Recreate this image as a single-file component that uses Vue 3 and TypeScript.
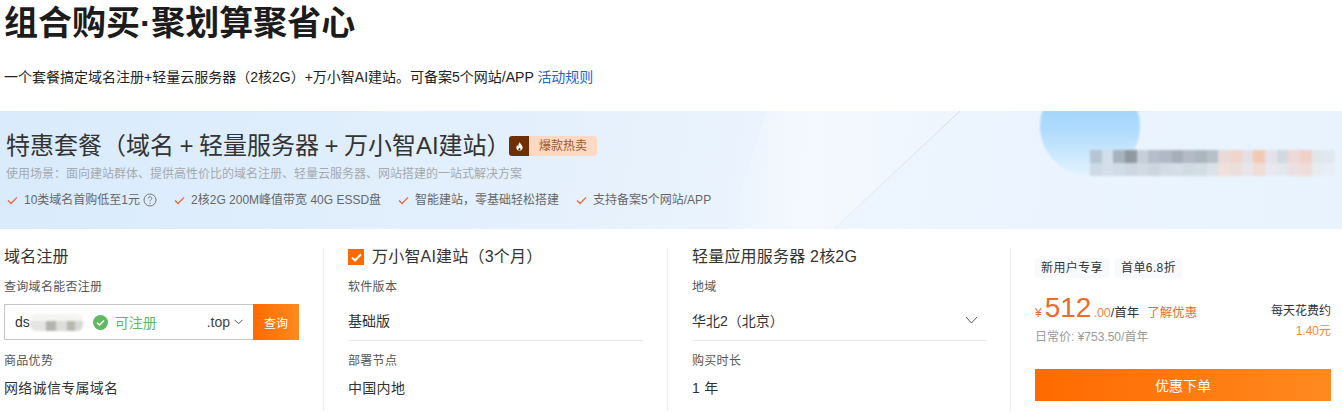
<script setup lang="ts">
const features = [
  { text: '10类域名首购低至1元', help: true },
  { text: '2核2G 200M峰值带宽 40G ESSD盘', help: false },
  { text: '智能建站，零基础轻松搭建', help: false },
  { text: '支持备案5个网站/APP', help: false },
];

// masked text in the banner corner, one shade per cell
const maskTop = ['#b4c4d2', '#d4dee8', '#a3b2ba', '#8c949c', '#c4ced8', '#b4bcc8', '#aeb6c4', '#a4acb8', '#b0b8c4', '#a8b4bc', '#b4bec6', '#e9d8d8', '#f0d4cc', '#e6dee2', '#f2c8b4', '#e4e2e8', '#d0d8de', '#eed8d4', '#f0d0c8', '#dfe6ec', '#e0e8f0'];
const maskBottom = ['#cdd9e4', '#d4deea', '#d0dae4', '#ccd6e0', '#d0d8e2', '#ccd4de', '#d2dae4', '#d4dce6', '#d0dae2', '#d2dce2', '#dce2e8', '#f0e0da', '#ecdedc', '#e8e6ea', '#f0dcd4', '#e8e8ee', '#e2e8ee', '#ecdfe0', '#f0dcd8', '#e6ecf2', '#e8eef4'];
</script>

<template>
  <div class="page">
    <h1 class="title">组合购买·聚划算聚省心</h1>
    <p class="subtitle">一个套餐搞定域名注册+轻量云服务器（2核2G）+万小智AI建站。可备案5个网站/APP <a class="rules">活动规则</a></p>

    <section class="banner">
      <svg class="banner-art" width="1342" height="118" viewBox="0 0 1342 118" fill="none">
        <defs>
          <linearGradient id="ball" x1="0" y1="0" x2="0" y2="1">
            <stop offset="0" stop-color="#94cffb" />
            <stop offset="0.5" stop-color="#abdafc" />
            <stop offset="1" stop-color="#e4f3fe" />
          </linearGradient>
          <linearGradient id="band" x1="0" y1="0" x2="1" y2="0">
            <stop offset="0" stop-color="#fff" stop-opacity="0" />
            <stop offset="0.3" stop-color="#fff" stop-opacity="0.4" />
            <stop offset="1" stop-color="#fff" stop-opacity="0.1" />
          </linearGradient>
          <linearGradient id="crease" x1="0" y1="0" x2="0" y2="1">
            <stop offset="0" stop-color="#d2dde8" />
            <stop offset="1" stop-color="#e6eef6" />
          </linearGradient>
          <filter id="soft" x="-10%" y="-10%" width="120%" height="120%">
            <feGaussianBlur stdDeviation="1" />
          </filter>
        </defs>
        <path d="M767 0H960L834 118H728Z" fill="url(#band)" />
        <path d="M960 0L834 118" stroke="url(#crease)" stroke-width="1" />
        <circle cx="1090" cy="15" r="50" fill="url(#ball)" filter="url(#soft)" />
      </svg>
      <div class="mask">
        <div class="mask-row">
          <i v-for="(c, i) in maskTop" :key="i" :style="{ background: c }"></i>
        </div>
        <div class="mask-row">
          <i v-for="(c, i) in maskBottom" :key="i" :style="{ background: c }"></i>
        </div>
      </div>
      <div class="banner-head">
        <h2 class="banner-title">特惠套餐（域名 + 轻量服务器 + 万小智AI建站）</h2>
        <span class="hot">
          <span class="hot-icon">
            <svg width="7" height="9" viewBox="0 0 8 10"><path fill="#fff" d="M4.200 0c.2 1.500 3.400 3.300 3.400 6.200C7.600 8.400 6 10 4 10S.4 8.400.4 6.200C.4 5 1 4 1.800 3.400c0 .9.3 1.400.8 1.600C2.600 3.200 3.200 1.400 4.200 0z" /><path fill="#6e3003" d="M4 6.400c.7.700 1.300 1.200 1.300 2 0 .7-.6 1.200-1.300 1.200s-1.300-.5-1.300-1.200c0-.8.6-1.300 1.300-2z" /></svg>
          </span>
          <span class="hot-text">爆款热卖</span>
        </span>
      </div>
      <p class="usage">使用场景：面向建站群体、提供高性价比的域名注册、轻量云服务器、网站搭建的一站式解决方案</p>
      <ul class="features">
        <li v-for="f in features" :key="f.text" class="feature">
          <svg class="tick" width="11" height="9" viewBox="0 0 12 10" fill="none" stroke="#ee6a3c" stroke-width="1.500"><path d="M1 5l3.400 3.400L11 1.500" /></svg>
          <span>{{ f.text }}</span>
          <svg v-if="f.help" class="help" width="14" height="14" viewBox="0 0 14 14" fill="none" stroke="#777" stroke-width="1"><circle cx="7" cy="7" r="6" /><path d="M5.200 5.500c0-2.300 3.600-2.300 3.600-.1 0 1.400-1.800 1.400-1.800 3" /><path d="M7 9.700v1.100" /></svg>
        </li>
      </ul>
    </section>

    <section class="columns">
      <div class="col col-domain">
        <h3 class="col-title">域名注册</h3>
        <div class="label">查询域名能否注册</div>
        <div class="search">
          <div class="search-box">
            <span class="domain">ds</span>
            <span class="domain-mask"></span>
            <svg class="ok" width="15" height="15" viewBox="0 0 15 15"><circle cx="7.500" cy="7.500" r="7.500" fill="#62b862" /><path d="M4 7.700l2.500 2.400L11 5.400" fill="none" stroke="#fff" stroke-width="1.400" /></svg>
            <span class="avail">可注册</span>
            <span class="tld">.top</span>
            <svg class="tld-arrow" width="9" height="6" viewBox="0 0 9 6" fill="none" stroke="#555"><path d="M.5 .8l4 4 4-4" /></svg>
          </div>
          <button class="search-btn">查询</button>
        </div>
        <div class="label">商品优势</div>
        <div class="value">网络诚信专属域名</div>
      </div>

      <div class="col col-site">
        <h3 class="col-title check-title">
          <span class="check">
            <svg width="11" height="9" viewBox="0 0 11 9" fill="none" stroke="#fff" stroke-width="2"><path d="M1 4.500l3 3L10 1.200" /></svg>
          </span>
          万小智AI建站（3个月）
        </h3>
        <div class="label">软件版本</div>
        <div class="select">基础版</div>
        <div class="label label-next">部署节点</div>
        <div class="value">中国内地</div>
      </div>

      <div class="col col-server">
        <h3 class="col-title">轻量应用服务器 2核2G</h3>
        <div class="label">地域</div>
        <div class="select">
          <span>华北2（北京）</span>
          <svg class="select-arrow" width="13" height="8" viewBox="0 0 13 8" fill="none" stroke="#555"><path d="M1 1l5.500 6L12 1" /></svg>
        </div>
        <div class="label label-next">购买时长</div>
        <div class="value">1 年</div>
      </div>

      <div class="col col-buy">
        <div class="tags">
          <span class="tag">新用户专享</span>
          <span class="tag">首单6.8折</span>
        </div>
        <div class="price-row">
          <div class="price-left">
            <div class="price">
              <span class="yen">¥</span><span class="amount">512</span><span class="cents">.00</span><span class="unit">/首年</span><a class="discount">了解优惠</a>
            </div>
            <div class="regular">日常价: ¥753.50/首年</div>
          </div>
          <div class="daily">
            <div>每天花费约</div>
            <div class="daily-num">1.40元</div>
          </div>
        </div>
        <button class="order">优惠下单</button>
      </div>
    </section>
  </div>
</template>

<style scoped>
.page {
  width: 1342px;
  height: 414px;
  overflow: hidden;
  background: #fff;
  color: #222;
  font-family: "Liberation Sans", "Noto Sans CJK SC", sans-serif;
  text-spacing-trim: space-all;
}

.title {
  margin: 0;
  padding: 3px 0 0 4px;
  font-size: 34px;
  line-height: 40px;
  font-weight: 700;
  color: #1c1c1c;
}

.subtitle {
  margin: 0;
  padding: 24px 0 0 4px;
  height: 44px;
  font-size: 14px;
  line-height: 20px;
  color: #222;
}

.rules {
  color: #1a66c8;
}

.banner {
  position: relative;
  height: 118px;
  padding: 0 6px;
  box-sizing: border-box;
  overflow: hidden;
  background: linear-gradient(100deg, #d9ebfc 0%, #e4f0fc 40%, #edf5fe 62%, #e8f3fe 100%);
}

.banner-art {
  position: absolute;
  left: 0;
  top: 0;
}

.mask {
  position: absolute;
  left: 1090px;
  top: 39px;
  width: 245px;
  filter: blur(1px);
  opacity: 0.95;
}

.mask-row {
  display: grid;
  grid-template-columns: repeat(21, 1fr);
  height: 13px;
}

.banner-head {
  position: relative;
  display: flex;
  align-items: center;
  padding-top: 19px;
}

.banner-title {
  width: 503px;
  margin: 0;
  font-size: 24px;
  line-height: 32px;
  font-weight: 400;
  white-space: nowrap;
  word-spacing: -1.200px;
  color: #333;
}

.hot {
  display: flex;
  height: 20px;
  border-radius: 3px;
  overflow: hidden;
  background: #fbd9c2;
  font-size: 12px;
  line-height: 20px;
  color: #9f5a2c;
}

.hot-icon {
  display: flex;
  align-items: center;
  justify-content: center;
  width: 20px;
  background: #6e3003;
}

.hot-text {
  padding: 0 10px;
}

.usage {
  position: relative;
  margin: 3px 0 0;
  font-size: 12px;
  line-height: 18px;
  color: #a4a9ae;
}

.features {
  position: relative;
  display: flex;
  margin: 8px 0 0;
  padding: 0;
  list-style: none;
  font-size: 12px;
  line-height: 18px;
  color: #666;
}

.feature {
  display: flex;
  align-items: center;
  margin-right: 16px;
}

.tick {
  margin: 0 6px 0 1px;
}

.help {
  margin-left: 3px;
}

.columns {
  display: grid;
  grid-template-columns: 324px 344px 343px 1fr;
  height: 166px;
  margin-top: 19px;
}

.col {
  border-right: 1px solid #eceef0;
  padding: 0 24px;
  height: 163px;
  box-sizing: border-box;
}

.col-domain {
  padding: 0 24px 0 4px;
}

.col-buy {
  border-right: 0;
  padding: 10px 11px 0 24px;
}

.col-title {
  margin: 0;
  font-size: 16px;
  line-height: 18px;
  font-weight: 400;
  letter-spacing: 0.200px;
  color: #333;
}

.check-title {
  display: flex;
  align-items: center;
}

.check {
  display: flex;
  align-items: center;
  justify-content: center;
  width: 16px;
  height: 16px;
  margin-right: 8px;
  background: #ff6a00;
}

.label {
  margin-top: 12px;
  font-size: 12px;
  line-height: 18px;
  letter-spacing: 0.300px;
  color: #555;
}

.label-next {
  margin-top: 11px;
}

.value {
  margin-top: 8px;
  font-size: 14px;
  line-height: 20px;
  letter-spacing: 0.300px;
  color: #333;
}

.search {
  display: flex;
  width: 295px;
  height: 36px;
  margin-top: 8px;
}

.search-box {
  flex: 1;
  display: flex;
  align-items: center;
  border: 1px solid #c4c6c8;
  border-right: 0;
  padding-left: 10px;
  font-size: 14px;
  color: #333;
}

.domain {
  line-height: 34px;
}

.domain-mask {
  width: 53px;
  height: 17px;
  border-radius: 6px;
  background:
    linear-gradient(180deg, #f4f4f3 0 40%, transparent 40%),
    linear-gradient(90deg, #e4e4e2 0 30%, #b4b4ae 30% 50%, #dcdcda 50% 70%, #b8b8b2 70% 85%, #d8d8d6 85%);
  filter: blur(1px);
}

.ok {
  margin-left: 10px;
}

.avail {
  margin-left: 7px;
  color: #62b862;
}

.tld {
  margin-left: auto;
  color: #444;
}

.tld-arrow {
  margin: 0 10px 0 4px;
}

.search-btn {
  width: 46px;
  border: 0;
  padding: 0;
  background: linear-gradient(90deg, #ff6a00, #ff8a1f);
  color: #fff;
  font-family: inherit;
  font-size: 12px;
}

.select {
  display: flex;
  align-items: center;
  justify-content: space-between;
  height: 36px;
  margin-top: 9px;
  padding: 0 8px 5px 0;
  box-sizing: border-box;
  border-bottom: 1px solid #e8eaec;
  font-size: 14px;
  color: #333;
}

.tags {
  display: flex;
  gap: 6px;
}

.tag {
  padding: 0 6px;
  border-radius: 3px;
  background: #f7f9fb;
  font-size: 12px;
  line-height: 20px;
  letter-spacing: 0.400px;
  color: #333;
}

.price-row {
  display: flex;
  justify-content: space-between;
  margin-top: 15px;
}

.price {
  display: flex;
  align-items: baseline;
  height: 30px;
  line-height: 30px;
  font-size: 12.500px;
  color: #333;
}

.yen {
  font-size: 12px;
  color: #ee6a2c;
  margin-right: 3px;
}

.amount {
  font-size: 28px;
  color: #ee6a2c;
}

.cents {
  margin-left: 2px;
  color: #ee8a4c;
}

.discount {
  margin-left: 8px;
  color: #ee6a2c;
}

.regular {
  margin-top: 5px;
  font-size: 12px;
  line-height: 18px;
  color: #999;
}

.daily {
  margin-top: 9px;
  text-align: right;
  font-size: 12px;
  line-height: 18px;
  color: #333;
}

.daily-num {
  margin-top: 2px;
  color: #ee8a3c;
}

.order {
  display: block;
  width: 100%;
  height: 32px;
  margin-top: 23px;
  border: 0;
  background: linear-gradient(90deg, #ff6a00, #ff8a1f);
  color: #fff;
  font-family: inherit;
  font-size: 14px;
}
</style>

<style>
html,
body {
  background: #fff;
}
</style>
